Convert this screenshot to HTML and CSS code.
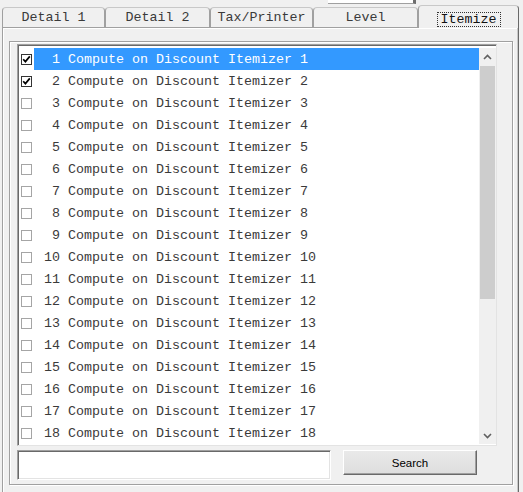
FILE: index.html
```html
<!DOCTYPE html>
<html>
<head>
<meta charset="utf-8">
<link rel="stylesheet" href="styles.css">
</head>
<body>
<div class="topstrip"><div class="clipped"></div></div>
<div class="tabs">
  <div class="tab w1">Detail 1</div>
  <div class="tab w2">Detail 2</div>
  <div class="tab w3">Tax/Printer</div>
  <div class="tab w4">Level</div>
  <div class="tab sel"><span class="focus">Itemize</span></div>
</div>
<div class="panel">
  <div class="frame">
    <div class="listbox">
      <div class="list">
        <div class="row"><span class="cb on"><svg width="9" height="9" viewBox="0 0 9 9"><path d="M1.2 4.2 L3.4 6.6 L7.8 1.4" fill="none" stroke="#000" stroke-width="1.7"/></svg></span><span class="label hl"> 1 Compute on Discount Itemizer 1</span></div>
        <div class="row"><span class="cb on"><svg width="9" height="9" viewBox="0 0 9 9"><path d="M1.2 4.2 L3.4 6.6 L7.8 1.4" fill="none" stroke="#000" stroke-width="1.7"/></svg></span><span class="label"> 2 Compute on Discount Itemizer 2</span></div>
        <div class="row"><span class="cb"></span><span class="label"> 3 Compute on Discount Itemizer 3</span></div>
        <div class="row"><span class="cb"></span><span class="label"> 4 Compute on Discount Itemizer 4</span></div>
        <div class="row"><span class="cb"></span><span class="label"> 5 Compute on Discount Itemizer 5</span></div>
        <div class="row"><span class="cb"></span><span class="label"> 6 Compute on Discount Itemizer 6</span></div>
        <div class="row"><span class="cb"></span><span class="label"> 7 Compute on Discount Itemizer 7</span></div>
        <div class="row"><span class="cb"></span><span class="label"> 8 Compute on Discount Itemizer 8</span></div>
        <div class="row"><span class="cb"></span><span class="label"> 9 Compute on Discount Itemizer 9</span></div>
        <div class="row"><span class="cb"></span><span class="label">10 Compute on Discount Itemizer 10</span></div>
        <div class="row"><span class="cb"></span><span class="label">11 Compute on Discount Itemizer 11</span></div>
        <div class="row"><span class="cb"></span><span class="label">12 Compute on Discount Itemizer 12</span></div>
        <div class="row"><span class="cb"></span><span class="label">13 Compute on Discount Itemizer 13</span></div>
        <div class="row"><span class="cb"></span><span class="label">14 Compute on Discount Itemizer 14</span></div>
        <div class="row"><span class="cb"></span><span class="label">15 Compute on Discount Itemizer 15</span></div>
        <div class="row"><span class="cb"></span><span class="label">16 Compute on Discount Itemizer 16</span></div>
        <div class="row"><span class="cb"></span><span class="label">17 Compute on Discount Itemizer 17</span></div>
        <div class="row"><span class="cb"></span><span class="label">18 Compute on Discount Itemizer 18</span></div>
      </div>
      <div class="scrollbar">
        <div class="arrow"><svg width="9" height="6" viewBox="0 0 9 6"><path d="M1 5 L4.5 1.5 L8 5" fill="none" stroke="#606060" stroke-width="1.6"/></svg></div>
        <div class="track"><div class="thumb"></div></div>
        <div class="arrow"><svg width="9" height="6" viewBox="0 0 9 6"><path d="M1 1 L4.5 4.5 L8 1" fill="none" stroke="#606060" stroke-width="1.6"/></svg></div>
      </div>
    </div>
    <div class="controls">
      <input class="search-input" type="text">
      <button class="search-btn">Search</button>
    </div>
  </div>
</div>
</body>
</html>
```
FILE: styles.css
```css
html, body {
  margin: 0;
  padding: 0;
}
body {
  width: 523px;
  height: 492px;
  overflow: hidden;
  background: #f0f0f0;
  font-family: "Courier New", "Nimbus Mono PS", "FreeMono", "Liberation Mono", monospace;
  font-size: 13.33px;
  color: #3a3a3a;
}
.topstrip {
  height: 4px;
}
.clipped {
  margin-left: 328px;
  width: 85px;
  height: 3px;
  background: #fff;
  border-right: 3px solid #6d6d6d;
  border-bottom: 1px solid #a0a0a0;
}
.tabs {
  display: flex;
  align-items: flex-end;
  height: 23px;
  margin-left: 2px;
}
.tab {
  box-sizing: border-box;
  height: 20px;
  border: 1px solid #a0a0a0;
  border-top-color: #c8c8c8;
  border-bottom: 0;
  border-radius: 4px 4px 0 0;
  display: flex;
  align-items: center;
  justify-content: center;
  color: #3a3a3a;
  white-space: pre;
}
.w1 { width: 103px; }
.w2 { width: 105px; }
.w3 { width: 103px; }
.w4 { width: 105px; }
.tab.sel {
  position: relative;
  z-index: 1;
  width: 101px;
  height: 23px;
  margin-bottom: -1px;
  background: #f0f0f0;
  padding-top: 4px;
  border-right-color: #696969;
  color: #111;
}
.focus {
  display: inline-block;
  line-height: 13px;
  padding: 0 3px;
  border: 1px dotted #333;
}
.panel {
  box-sizing: border-box;
  margin-left: 2px;
  width: 517px;
  height: 480px;
  border-top: 1px solid #a0a0a0;
  border-left: 1px solid #a0a0a0;
  border-right: 1px solid #696969;
  box-shadow: inset -1px 0 0 #c8c8c8, inset 1px 1px 0 #ffffff;
  padding-top: 13px;
  padding-left: 6px;
}
.frame {
  box-sizing: border-box;
  width: 504px;
  height: 444px;
  border: 1px solid #a0a0a0;
  box-shadow: inset 1px 1px 0 #ffffff, 1px 1px 0 #ffffff;
  padding: 2px 0 0 7px;
}
.listbox {
  box-sizing: border-box;
  width: 480px;
  height: 402px;
  display: flex;
  background: #fff;
  border-top: 1px solid #a0a0a0;
  border-left: 1px solid #a0a0a0;
  border-right: 1px solid #e3e3e3;
  border-bottom: 1px solid #e3e3e3;
  box-shadow: inset 1px 1px 0 #696969;
  padding-top: 3px;
}
.list {
  width: 461px;
  display: flex;
  flex-direction: column;
}
.row {
  height: 22px;
  display: flex;
  align-items: center;
}
.cb {
  box-sizing: border-box;
  width: 11px;
  height: 11px;
  margin-left: 3px;
  border: 1px solid #a5a5a5;
  background: #fff;
  display: flex;
  align-items: center;
  justify-content: center;
}
.cb.on {
  border-color: #333;
}
.label {
  margin-left: 2px;
  flex: 1;
  height: 22px;
  line-height: 23px;
  overflow: hidden;
  padding-left: 10px;
  white-space: pre;
  color: #3a3a3a;
}
.label.hl {
  background: #3399ff;
  color: #fff;
}
.scrollbar {
  width: 17px;
  height: 396px;
  display: flex;
  flex-direction: column;
  background: #f0f0f0;
}
.arrow {
  height: 17px;
  display: flex;
  align-items: center;
  justify-content: center;
}
.track {
  flex: 1;
  padding: 1px 1px 0 1px;
}
.thumb {
  height: 233px;
  background: #cdcdcd;
}
.controls {
  display: flex;
  align-items: flex-start;
  gap: 12px;
  margin-top: 4px;
}
.search-input {
  box-sizing: border-box;
  width: 314px;
  height: 30px;
  margin: 0;
  padding: 0;
  background: #fff;
  border-top: 1px solid #a0a0a0;
  border-left: 1px solid #a0a0a0;
  border-right: 1px solid #ffffff;
  border-bottom: 1px solid #ffffff;
  box-shadow: inset 1px 1px 0 #696969, inset -1px -1px 0 #e3e3e3;
  outline: none;
}
.search-btn {
  box-sizing: border-box;
  width: 134px;
  height: 25px;
  margin: 0;
  padding: 0;
  background: linear-gradient(#e9e9e9, #dedede);
  border-top: 1px solid #ffffff;
  border-left: 1px solid #ffffff;
  border-right: 1px solid #696969;
  border-bottom: 1px solid #696969;
  box-shadow: inset -1px -1px 0 #a0a0a0;
  font-family: "Liberation Sans", Arial, sans-serif;
  font-size: 11.5px;
  color: #000;
}
```
